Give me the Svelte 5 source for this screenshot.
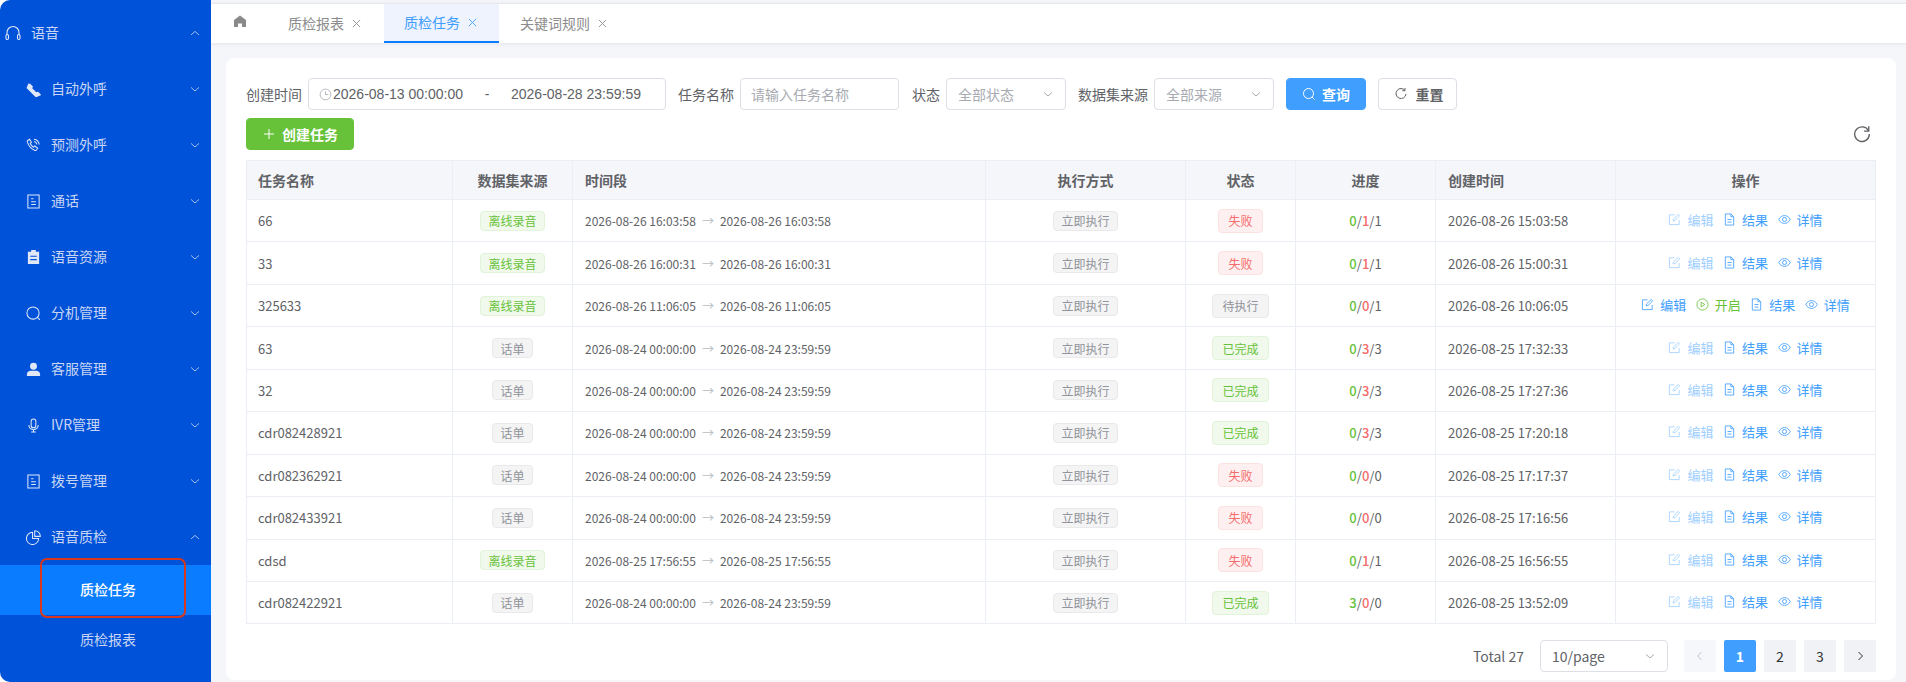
<script>
  const menu = [
    { label: '自动外呼', icon: 'phone' },
    { label: '预测外呼', icon: 'phone2' },
    { label: '通话', icon: 'doc' },
    { label: '语音资源', icon: 'clip' },
    { label: '分机管理', icon: 'search' },
    { label: '客服管理', icon: 'user' },
    { label: 'IVR管理', icon: 'mic' },
    { label: '拨号管理', icon: 'doc' }
  ];
  const rows = [
    ['66', 1, '2026-08-26 16:03:58', '2026-08-26 16:03:58', 'fail', 0, 1, 1, '2026-08-26 15:03:58'],
    ['33', 1, '2026-08-26 16:00:31', '2026-08-26 16:00:31', 'fail', 0, 1, 1, '2026-08-26 15:00:31'],
    ['325633', 1, '2026-08-26 11:06:05', '2026-08-26 11:06:05', 'wait', 0, 0, 1, '2026-08-26 10:06:05'],
    ['63', 0, '2026-08-24 00:00:00', '2026-08-24 23:59:59', 'done', 0, 3, 3, '2026-08-25 17:32:33'],
    ['32', 0, '2026-08-24 00:00:00', '2026-08-24 23:59:59', 'done', 0, 3, 3, '2026-08-25 17:27:36'],
    ['cdr082428921', 0, '2026-08-24 00:00:00', '2026-08-24 23:59:59', 'done', 0, 3, 3, '2026-08-25 17:20:18'],
    ['cdr082362921', 0, '2026-08-24 00:00:00', '2026-08-24 23:59:59', 'fail', 0, 0, 0, '2026-08-25 17:17:37'],
    ['cdr082433921', 0, '2026-08-24 00:00:00', '2026-08-24 23:59:59', 'fail', 0, 0, 0, '2026-08-25 17:16:56'],
    ['cdsd', 1, '2026-08-25 17:56:55', '2026-08-25 17:56:55', 'fail', 0, 1, 1, '2026-08-25 16:56:55'],
    ['cdr082422921', 0, '2026-08-24 00:00:00', '2026-08-24 23:59:59', 'done', 3, 0, 0, '2026-08-25 13:52:09']
  ];
  const statusText = { fail: '失败', wait: '待执行', done: '已完成' };
</script>

{#snippet chev(up)}
  <svg class="chev" viewBox="0 0 12 12"><path d={up ? 'M2 8l4-3.6L10 8' : 'M2 4.4L6 8l4-3.6'} /></svg>
{/snippet}

{#snippet menuIcon(name)}
  <svg class="micon" viewBox="0 0 16 16">
    {#if name === 'phone'}
      <path class="solid" transform="translate(-1 -1) scale(.0185)" d="M199.232 125.568 90.624 379.008a32 32 0 0 0 6.784 35.2l512.384 512.384a32 32 0 0 0 35.2 6.784l253.44-108.608a32 32 0 0 0 9.984-52.032l-153.6-153.6a32 32 0 0 0-36.928-6.016l-69.888 34.944L413.12 413.12l34.944-69.888a32 32 0 0 0-5.952-36.928l-153.6-153.6a32 32 0 0 0-52.032 9.984z" />
    {:else if name === 'phone2'}
      <path d="M1.800 2.600l2-1.200 2 3.200-1.300 1.200c.7 1.700 1.900 3 3.600 4l1.300-1.300 3 2.300-1.200 2c-.4.5-1 .7-1.600.5C5.900 12 2.900 8.700 1.400 4.200c-.2-.6 0-1.200.4-1.600z" />
      <path d="M8.500 1.300a6.500 6.500 0 0 1 5.600 5.600M8.500 3.800a4 4 0 0 1 3.200 3.100" />
    {:else if name === 'doc'}
      <path d="M2 1h12v14H2zM5.500 5h2.500M5.500 8.300h5M5.500 11.300h5" />
    {:else if name === 'clip'}
      <path class="solid" fill-rule="evenodd" d="M5.500 0h5v1.800h3.500V15H2V1.800h3.500zM4.500 6v1.300h7V6zm0 3.500v1.300h7V9.500z" />
    {:else if name === 'search'}
      <circle cx="7.500" cy="7.500" r="6.500" /><path d="M12.200 12.200l2.600 2.600" />
    {:else if name === 'user'}
      <circle class="solid" cx="8" cy="4.500" r="3.700" /><path class="solid" d="M1 15v-2c0-2.200 2-3.700 4-3.700h6c2 0 4 1.500 4 3.700v2z" />
    {:else if name === 'mic'}
      <rect x="5.500" y="1" width="5" height="9.500" rx="2.500" /><path d="M3 7.500c0 3 2.200 5 5 5s5-2 5-5M8 12.500V15M5.500 15h5" />
    {:else if name === 'pie'}
      <path d="M7 2.500a6.500 6.500 0 1 0 6.500 6.500H7z" /><path d="M9.300 .8a6 6 0 0 1 6 6h-6z" />
    {:else if name === 'head'}
      <path d="M2 10V7.500a6 6 0 0 1 12 0V10" /><rect x="1" y="9.500" width="2.500" height="5" rx="1.200" /><rect x="12.500" y="9.500" width="2.500" height="5" rx="1.200" />
    {/if}
  </svg>
{/snippet}

{#snippet close()}
  <svg class="close" viewBox="0 0 10 10"><path d="M1 1l8 8M9 1l-8 8" /></svg>
{/snippet}

{#snippet opIcon(name)}
  <svg class="opicon" viewBox="0 0 14 14">
    {#if name === 'edit'}
      <path d="M12 7.500V12.500H1.500V2H7M5.500 8.500l.4-2 5.100-5 1.600 1.600-5.100 5z" />
    {:else if name === 'play'}
      <circle cx="7" cy="7" r="6" /><path d="M5.500 4.500l4 2.500-4 2.500z" />
    {:else if name === 'file'}
      <path d="M2.500 1h6l3 3v9h-9zM8.500 1v3h3M4.800 7h4.400M4.800 9.800h4.400" />
    {:else}
      <path d="M.8 7c1.500-2.800 3.600-4.200 6.200-4.200s4.700 1.400 6.200 4.200c-1.500 2.800-3.600 4.200-6.200 4.200S2.300 9.800.8 7z" /><circle cx="7" cy="7" r="2.200" />
    {/if}
  </svg>
{/snippet}

<div class="page">
  <aside class="side">
    <div class="item top">
      {@render menuIcon('head')}<span class="tx">语音</span>{@render chev(true)}
    </div>
    {#each menu as m}
      <div class="item sub">
        {@render menuIcon(m.icon)}<span class="tx">{m.label}</span>{@render chev(false)}
      </div>
    {/each}
    <div class="item sub">
      {@render menuIcon('pie')}<span class="tx">语音质检</span>{@render chev(true)}
    </div>
    <div class="leaf active">质检任务</div>
    <div class="leaf">质检报表</div>
    <div class="mark"></div>
  </aside>

  <main class="main">
    <nav class="tabs">
      <div class="home">
        <svg viewBox="0 0 14 14"><path d="M7 1.500L13 6v7H9V9.500H5V13H1V6z" /></svg>
      </div>
      <div class="tab">质检报表{@render close()}</div>
      <div class="tab on">质检任务{@render close()}</div>
      <div class="tab">关键词规则{@render close()}</div>
    </nav>

    <section class="card">
      <div class="filters">
        <span class="lb">创建时间</span>
        <div class="box range">
          <svg class="clock" viewBox="0 0 14 14"><circle cx="7" cy="7" r="5.800" /><path d="M7 3.500V7h3" /></svg>
          <span class="rv">2026-08-13 00:00:00</span><span class="dash">-</span><span class="rv">2026-08-28 23:59:59</span>
        </div>
        <span class="lb l2">任务名称</span>
        <div class="box name ph">请输入任务名称</div>
        <span class="lb l3 first">状态</span>
        <div class="box sel ph">全部状态{@render chev(false)}</div>
        <span class="lb l3">数据集来源</span>
        <div class="box sel ph">全部来源{@render chev(false)}</div>
        <button class="btn primary"><svg viewBox="0 0 14 14"><circle cx="6.500" cy="6.500" r="5" /><path d="M10 10l2.500 2.500" /></svg>查询</button>
        <button class="btn reset"><svg viewBox="0 0 14 14"><path d="M11 3.500A5 5 0 1 0 12 7" /><path d="M11 1v2.700H8.300" /></svg>重置</button>
      </div>

      <div class="tools">
        <button class="btn create"><svg viewBox="0 0 14 14"><path d="M7 2v10M2 7h10" /></svg>创建任务</button>
        <svg class="refresh" viewBox="0 0 16 16"><path d="M13.800 5.200A6.500 6.500 0 1 0 14.500 8" /><path d="M14 1.200v4.200H9.800" /></svg>
      </div>

      <div class="table">
        <div class="row head">
          <div class="cell">任务名称</div>
          <div class="cell c">数据集来源</div>
          <div class="cell">时间段</div>
          <div class="cell c">执行方式</div>
          <div class="cell c">状态</div>
          <div class="cell c">进度</div>
          <div class="cell">创建时间</div>
          <div class="cell c">操作</div>
        </div>
        {#each rows as r}
          <div class="row">
            <div class="cell">{r[0]}</div>
            <div class="cell c">
              {#if r[1]}<span class="tag green">离线录音</span>{:else}<span class="tag gray">话单</span>{/if}
            </div>
            <div class="cell period">{r[2]}<span class="arrow">→</span>{r[3]}</div>
            <div class="cell c"><span class="tag gray">立即执行</span></div>
            <div class="cell c"><span class="tag big {r[4]}">{statusText[r[4]]}</span></div>
            <div class="cell c prog"><b class="g">{r[5]}</b>/<b class="r">{r[6]}</b>/{r[7]}</div>
            <div class="cell">{r[8]}</div>
            <div class="cell c ops">
              <span class="op" class:dim={r[4] !== 'wait'}>{@render opIcon('edit')}编辑</span>
              {#if r[4] === 'wait'}<span class="op start">{@render opIcon('play')}开启</span>{/if}
              <span class="op">{@render opIcon('file')}结果</span>
              <span class="op">{@render opIcon('eye')}详情</span>
            </div>
          </div>
        {/each}
      </div>

      <div class="pager">
        <span class="total">Total 27</span>
        <div class="box size">10/page{@render chev(false)}</div>
        <div class="pg dis"><svg viewBox="0 0 12 12"><path d="M7.500 2L3.500 6l4 4" /></svg></div>
        <div class="pg cur">1</div>
        <div class="pg">2</div>
        <div class="pg">3</div>
        <div class="pg"><svg viewBox="0 0 12 12"><path d="M4.500 2l4 4-4 4" /></svg></div>
      </div>
    </section>
  </main>
</div>

<style>
  :global(body) {
    margin: 0;
    background: #fff;
    font-family: "Noto Sans CJK SC", "Noto Sans", sans-serif;
  }
  svg { fill: none; stroke: currentColor; flex: none; }
  .page {
    display: flex;
    height: 682px;
    width: 1906px;
    overflow: hidden;
    color: #606266;
    font-size: 13px;
  }
  .side {
    position: relative;
    width: 211px;
    flex: none;
    box-sizing: border-box;
    padding-top: 5px;
    background: #0052d9;
    border-radius: 10px 0 0 10px;
    color: #c9d6f3;
    font-size: 14px;
    overflow: hidden;
  }
  .item {
    display: flex;
    align-items: center;
    height: 56px;
  }
  .top { padding-left: 5px; }
  .sub { padding-left: 26px; }
  .micon {
    width: 16px;
    height: 16px;
    stroke-width: 1.1;
    margin-right: 10px;
    color: #e0e8f8;
  }
  .micon .solid { fill: currentColor; stroke: none; }
  .sub .micon { width: 15px; height: 15px; }
  .tx { flex: 1; padding-bottom: 2px; }
  .chev {
    width: 12px;
    height: 12px;
    stroke-width: 1;
    margin-right: 10px;
    color: #a9bfee;
  }
  .leaf {
    height: 50px;
    line-height: 48px;
    text-align: center;
    padding-left: 5px;
  }
  .active {
    background: #0a7cff;
    color: #fff;
    font-weight: 500;
  }
  .mark {
    position: absolute;
    left: 40px;
    top: 558px;
    width: 146px;
    height: 60px;
    box-sizing: border-box;
    border: 2px solid #d8391d;
    border-radius: 7px;
  }

  .main {
    flex: 1;
    min-width: 0;
    background: #f5f6fa;
    display: flex;
    flex-direction: column;
  }
  .tabs {
    display: flex;
    height: 40px;
    margin-top: 3px;
    box-sizing: border-box;
    flex: none;
    background: #fff;
    border-top: 1px solid #e4e7ed;
    box-shadow: 0 1px 4px rgba(0, 21, 41, .08);
    color: #8c8c8c;
    font-size: 14px;
    line-height: 39px;
  }
  .home { width: 57px; flex: none; padding-left: 22px; box-sizing: border-box; }
  .home svg { width: 14px; height: 14px; fill: #8a8a8a; stroke: none; margin-top: 10px; display: block; }
  .tab {
    display: flex;
    align-items: center;
    padding: 0 22px 0 20px;
    box-sizing: border-box;
    height: 39px;
  }
  .tab:nth-child(2) { padding-right: 23px; }
  .tab.on {
    background: #eff3fd;
    color: #409eff;
    border-bottom: 2px solid #0a7cff;
    margin-right: 1px;
  }
  .close {
    width: 9px;
    height: 9px;
    margin-left: 8px;
    stroke-width: 1;
  }
  .card {
    flex: 1;
    margin: 15px 10px 2px 15px;
    padding: 20px 20px 0;
    background: #fff;
    border-radius: 8px;
    min-height: 0;
  }
  .filters {
    display: flex;
    align-items: center;
    height: 32px;
  }
  .lb { font-size: 14px; white-space: nowrap; margin-right: 6px; }
  .l2 { margin-left: 12px; }
  .l3 { margin-left: 12px; }
  .first { margin-left: 13px; }
  .box {
    box-sizing: border-box;
    height: 32px;
    border: 1px solid #dcdfe6;
    border-radius: 4px;
    display: flex;
    align-items: center;
    background: #fff;
    flex: none;
  }
  .range {
    width: 358px;
    padding-left: 10px;
    font-family: "Liberation Sans", Arial, sans-serif;
    font-size: 14px;
  }
  .rv { white-space: nowrap; }
  .clock { width: 13px; height: 13px; color: #a8abb2; stroke-width: .9; margin-right: 1px; }
  .dash { width: 48px; text-align: center; }
  .name { width: 159px; padding-left: 10px; }
  .ph { color: #a8abb2; font-size: 14px; }
  .sel { width: 120px; padding-left: 11px; justify-content: space-between; }
  .sel .chev, .size .chev { color: #a8abb2; margin-right: 11px; }
  .btn {
    height: 32px;
    box-sizing: border-box;
    border-radius: 4px;
    font: 600 14px "Noto Sans CJK SC", sans-serif;
    display: flex;
    align-items: center;
    justify-content: center;
    gap: 6px;
    padding: 0;
    border: 1px solid #dcdfe6;
    background: #fff;
    color: #606266;
    flex: none;
  }
  .btn svg { width: 14px; height: 14px; stroke-width: 1; }
  .primary { width: 80px; margin-left: 12px; background: #409eff; border-color: #409eff; color: #fff; }
  .reset { width: 79px; margin-left: 12px; gap: 8px; padding-left: 2px; }
  .tools {
    display: flex;
    align-items: center;
    justify-content: space-between;
    margin-top: 8px;
    height: 32px;
    margin-bottom: 10px;
  }
  .create { width: 108px; background: #67c23a; border-color: #67c23a; color: #fff; }
  .refresh { width: 18px; height: 18px; stroke-width: 1.200; margin-right: 5px; color: #606266; }
  .table {
    width: 1630px;
    box-sizing: border-box;
    border: 1px solid #ebeef5;
    border-bottom: 0;
  }
  .row {
    display: grid;
    grid-template-columns: 206px 120px 413px 200px 110px 140px 180px 1fr;
    height: 42.45px;
    box-sizing: border-box;
    border-bottom: 1px solid #ebeef5;
  }
  .head {
    height: 39px;
    background: #f5f6fa;
    font-weight: 600;
    font-size: 14px;
    color: #606266;
  }
  .cell {
    display: flex;
    align-items: center;
    padding: 0 12px;
    border-right: 1px solid #ebeef5;
    min-width: 0;
    white-space: nowrap;
  }
  .cell:first-child { padding-left: 11px; }
  .cell:last-child { border-right: 0; }
  .c { justify-content: center; }
  .period { font-size: 12px; }
  .arrow { color: #b8bbc2; margin: 0 6px; font-size: 12px; }
  .tag {
    box-sizing: border-box;
    display: inline-flex;
    align-items: center;
    height: 20px;
    padding: 0 7px;
    border-radius: 4px;
    font-size: 12px;
    border: 1px solid;
  }
  .gray { background: #f4f4f5; border-color: #e9e9eb; color: #909399; }
  .green { background: #f0f9eb; border-color: #e1f3d8; color: #67c23a; }
  .big { height: 24px; padding: 0 9px; }
  .fail { background: #fef0f0; border-color: #fde2e2; color: #f56c6c; }
  .done { background: #f0f9eb; border-color: #e1f3d8; color: #67c23a; }
  .wait { background: #f4f4f5; border-color: #e9e9eb; color: #909399; }
  .prog b { font-weight: 500; }
  .g { color: #67c23a; }
  .r { color: #f56c6c; }
  .ops { gap: 9.5px; color: #409eff; padding: 0 0 2px; }
  .op { display: inline-flex; align-items: center; gap: 6px; }
  .opicon { width: 13px; height: 13px; stroke-width: .9; }
  .dim { color: #a0cfff; }
  .start { color: #67c23a; }
  .pager {
    display: flex;
    justify-content: flex-end;
    align-items: center;
    height: 32px;
    margin-top: 16px;
    width: 1630px;
    font-size: 14px;
    gap: 8px;
  }
  .total { margin-right: 8px; }
  .size {
    width: 128px;
    padding-left: 11px;
    justify-content: space-between;
    margin-right: 8px;
  }
  .pg {
    width: 32px;
    height: 32px;
    background: #f0f2f5;
    border-radius: 2px;
    display: flex;
    align-items: center;
    justify-content: center;
    color: #303133;
  }
  .pg svg { width: 12px; height: 12px; stroke-width: 1; }
  .dis { color: #c0c4cc; background: #f5f7fa; }
  .cur { background: #409eff; color: #fff; font-weight: 700; }
</style>
